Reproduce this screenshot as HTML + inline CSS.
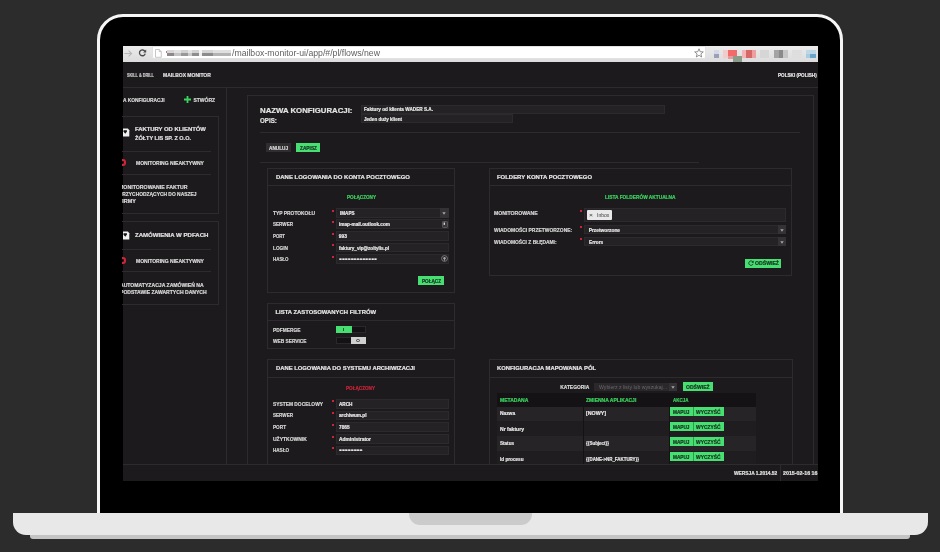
<!DOCTYPE html><html><head><meta charset="utf-8"><style>html,body{margin:0;padding:0;width:940px;height:552px;overflow:hidden;background:#2c2c2c;position:relative}.b{position:absolute}.t{position:absolute;white-space:nowrap;line-height:1;font-family:"Liberation Sans", sans-serif;transform-origin:0 50%}.s{-webkit-text-stroke:0.2px currentColor}</style></head><body><div class="b" style="left:97px;top:13.5px;width:746px;height:516.5px;background:#000;box-sizing:border-box;border:3px solid #f6f6f6;border-radius:26px 26px 0 0;"></div><div class="b" style="left:122.5px;top:45.5px;width:695.0px;height:435.0px;background:#1c1a1c;"></div><div class="b" style="left:12.5px;top:513px;width:915.5px;height:22px;background:#e8e8e8;border-radius:0 0 13px 13px;"></div><div class="b" style="left:30px;top:535px;width:880px;height:4px;background:#c4c4c4;border-radius:0 0 3px 3px;"></div><div class="b" style="left:408.5px;top:513px;width:123.0px;height:12px;background:#cbcbcb;border-radius:0 0 11px 11px;"></div><div style="position:absolute;left:122px;top:45px;width:696px;height:436px;overflow:hidden;will-change:transform"><div style="position:absolute;left:-122px;top:-45px;width:940px;height:552px"><div class="b" style="left:122.5px;top:45.5px;width:695.0px;height:16.5px;background:linear-gradient(#ebebeb,#dcdcdc);"></div><div class="b" style="left:152px;top:46px;width:553.5px;height:13px;background:#fff;box-sizing:border-box;border:1px solid #e2e2e2;border-radius:0 0 2px 2px;"></div><svg style="position:absolute;left:124px;top:49.5px" width="9" height="7" viewBox="0 0 9 7"><path d="M0.3 3.5H7.6M4.6 0.7L7.6 3.5L4.6 6.3" fill="none" stroke="#b8b8b8" stroke-width="1.1"/></svg><svg style="position:absolute;left:138px;top:49px" width="9" height="8" viewBox="0 0 9 8"><path d="M6.9 2.4A2.9 2.9 0 1 0 7.2 4.6" fill="none" stroke="#4a4a4a" stroke-width="1.3"/><path d="M8.2 0.5V3.6H5.1Z" fill="#4a4a4a"/></svg><svg style="position:absolute;left:155px;top:48.5px" width="7" height="9" viewBox="0 0 7 9"><path d="M0.5 0.5H4.2L6.3 2.6V8.3H0.5Z M4.2 0.5V2.6H6.3" fill="#fff" stroke="#b0b0b0" stroke-width="0.7"/></svg><div style="position:absolute;left:165.5px;top:51px;width:1px;height:2px;background:#d07070"></div><div style="position:absolute;left:0;top:0;width:940px;height:552px;filter:blur(0.7px)"><div style="position:absolute;left:166.8px;top:49.5px;width:7.199999999999989px;height:3.2px;background:#d6d6d6"></div><div style="position:absolute;left:174px;top:49.5px;width:7px;height:3.2px;background:#e2e2e2"></div><div style="position:absolute;left:181px;top:49.5px;width:6.5px;height:3.2px;background:#d0d0d0"></div><div style="position:absolute;left:187.5px;top:49.5px;width:4.5px;height:3.2px;background:#e4e4e4"></div><div style="position:absolute;left:192px;top:49.5px;width:7px;height:3.2px;background:#d2d2d2"></div><div style="position:absolute;left:199px;top:49.5px;width:2.5px;height:3.2px;background:#f4f4f4"></div><div style="position:absolute;left:202px;top:49.5px;width:11px;height:3.2px;background:#d4d4d4"></div><div style="position:absolute;left:213px;top:49.5px;width:18px;height:3.2px;background:#e0e0e0"></div><div style="position:absolute;left:166.8px;top:52.7px;width:7.199999999999989px;height:3.2px;background:#8a8a8a"></div><div style="position:absolute;left:174px;top:52.7px;width:7px;height:3.2px;background:#c4c4c4"></div><div style="position:absolute;left:181px;top:52.7px;width:6.5px;height:3.2px;background:#989898"></div><div style="position:absolute;left:187.5px;top:52.7px;width:4.5px;height:3.2px;background:#cacaca"></div><div style="position:absolute;left:192px;top:52.7px;width:7px;height:3.2px;background:#8e8e8e"></div><div style="position:absolute;left:199px;top:52.7px;width:2.5px;height:3.2px;background:#f0f0f0"></div><div style="position:absolute;left:202px;top:52.7px;width:11px;height:3.2px;background:#8c8c8c"></div><div style="position:absolute;left:213px;top:52.7px;width:18px;height:3.2px;background:#b4b4b4"></div></div><div class="t" style="left:232.00px;top:49.00px;font-size:8.8px;color:#606060;font-weight:400;transform:scaleX(0.989);">/mailbox-monitor-ui/app/#/pl/flows/new</div><svg style="position:absolute;left:694px;top:48px" width="10" height="10" viewBox="0 0 10 10"><path d="M5 0.8L6.2 3.7L9.3 3.9L6.9 5.9L7.7 9L5 7.3L2.3 9L3.1 5.9L0.7 3.9L3.8 3.7Z" fill="none" stroke="#777" stroke-width="0.8"/></svg><div style="position:absolute;left:0;top:0;width:940px;height:552px;filter:blur(0.6px)"><div style="position:absolute;left:714px;top:50px;width:5px;height:4px;background:#d4d8e6"></div><div style="position:absolute;left:714px;top:54px;width:5px;height:4px;background:#9aa0ba"></div><div style="position:absolute;left:723px;top:50px;width:5px;height:8px;background:#f2cccc"></div><div style="position:absolute;left:727.5px;top:49.5px;width:9.5px;height:6.5px;background:#f26a6a"></div><div style="position:absolute;left:728px;top:56px;width:5px;height:3px;background:#e89a9a"></div><div style="position:absolute;left:732.5px;top:55.5px;width:9px;height:6.5px;background:#8c9c8a"></div><div style="position:absolute;left:741.5px;top:50px;width:4px;height:8px;background:#f2b4b4"></div><div style="position:absolute;left:745.5px;top:50px;width:6px;height:8px;background:#d86868"></div><div style="position:absolute;left:751.5px;top:50px;width:4px;height:8px;background:#eea0a0"></div><div style="position:absolute;left:759.5px;top:50px;width:9px;height:8px;background:#d6d6d6"></div><div style="position:absolute;left:774px;top:50px;width:5px;height:8px;background:#a4a4a4"></div><div style="position:absolute;left:779px;top:50px;width:4px;height:8px;background:#8a8a8a"></div><div style="position:absolute;left:783px;top:50px;width:5px;height:8px;background:#c6c6c6"></div><div style="position:absolute;left:792px;top:50px;width:10px;height:8px;background:#dedede"></div><div style="position:absolute;left:806px;top:50px;width:10px;height:4px;background:#bcd8e6"></div><div style="position:absolute;left:806px;top:54px;width:4px;height:4px;background:#a8cce0"></div><div style="position:absolute;left:810px;top:54px;width:6px;height:4px;background:#6aa6cc"></div></div><div class="b" style="left:122.5px;top:87px;width:695.0px;height:1px;background:#2d2b2d;"></div><div class="t s" style="left:127.10px;top:74.00px;font-size:4.6px;color:#c8c8c8;font-weight:700;transform:scaleX(0.822);">SKILL &amp; DRILL</div><div class="t s" style="left:163.00px;top:73.00px;font-size:5.2px;color:#e0e0e0;font-weight:700;transform:scaleX(0.961);">MAILBOX MONITOR</div><div class="t s" style="left:778.30px;top:73.00px;font-size:5px;color:#e8e8e8;font-weight:700;transform:scaleX(0.922);">POLSKI (POLISH)</div><div class="b" style="left:226px;top:87px;width:1px;height:377px;background:#2d2b2d;"></div><div class="t s" style="left:123.00px;top:99.00px;font-size:4.9px;color:#d8d8d8;font-weight:700;transform:scaleX(0.992);">A KONFIGURACJI</div><svg style="position:absolute;left:183.8px;top:95.5px" width="7" height="7" viewBox="0 0 7 7"><path d="M3.5 0V7M0 3.5H7" stroke="#3bd45f" stroke-width="1.8"/></svg><div class="t s" style="left:193.40px;top:98.00px;font-size:5px;color:#d8d8d8;font-weight:700;">STWÓRZ</div><div class="b" style="left:110px;top:115.5px;width:109px;height:98.0px;box-sizing:border-box;border:1px solid #2d2b2d;"></div><svg style="position:absolute;left:122.5px;top:128.2px" width="7" height="9" viewBox="0 0 7 9"><path d="M0 0.6H4.9L6.3 2.2V8.6H0Z" fill="#f0f0f0"/><path d="M0.5 2.3H3.9V3.6L2.3 5.7L0.5 3.8Z" fill="#151315"/></svg><div class="t s" style="left:134.90px;top:127.00px;font-size:5.9px;color:#e2e2e2;font-weight:700;">FAKTURY OD KLIENTÓW</div><div class="t s" style="left:134.90px;top:136.00px;font-size:5.9px;color:#e2e2e2;font-weight:700;transform:scaleX(0.938);">ŻÓŁTY LIS SP. Z O.O.</div><div class="b" style="left:115px;top:151px;width:96px;height:1px;background:#2d2b2d;"></div><div style="position:absolute;left:119.6px;top:159.4px;width:6.4px;height:6.4px;box-sizing:border-box;border:2.2px solid #d0243a;border-radius:50%"></div><div class="t s" style="left:135.90px;top:161.00px;font-size:5px;color:#d8d8d8;font-weight:700;transform:scaleX(1.007);">MONITORING NIEAKTYWNY</div><div class="b" style="left:115px;top:174px;width:96px;height:1px;background:#2d2b2d;"></div><div class="t s" style="left:119.30px;top:185.00px;font-size:5px;color:#d8d8d8;font-weight:700;transform:scaleX(1.046);">MONITOROWANIE FAKTUR</div><div class="t s" style="left:119.30px;top:192.00px;font-size:5px;color:#d8d8d8;font-weight:700;transform:scaleX(0.982);">PRZYCHODZĄCYCH DO NASZEJ</div><div class="t s" style="left:119.30px;top:199.00px;font-size:5px;color:#d8d8d8;font-weight:700;transform:scaleX(1.092);">FIRMY</div><div class="b" style="left:110px;top:221px;width:109px;height:83.5px;box-sizing:border-box;border:1px solid #2d2b2d;"></div><svg style="position:absolute;left:122.5px;top:230.6px" width="7" height="9" viewBox="0 0 7 9"><path d="M0 0.6H4.9L6.3 2.2V8.6H0Z" fill="#f0f0f0"/><path d="M0.5 2.3H3.9V3.6L2.3 5.7L0.5 3.8Z" fill="#151315"/></svg><div class="t s" style="left:135.20px;top:233.00px;font-size:5.9px;color:#e2e2e2;font-weight:700;transform:scaleX(1.027);">ZAMÓWIENIA W PDFACH</div><div class="b" style="left:115px;top:249px;width:96px;height:1px;background:#2d2b2d;"></div><div style="position:absolute;left:119.6px;top:257.3px;width:6.4px;height:6.4px;box-sizing:border-box;border:2.2px solid #d0243a;border-radius:50%"></div><div class="t s" style="left:135.90px;top:259.00px;font-size:5px;color:#d8d8d8;font-weight:700;transform:scaleX(1.007);">MONITORING NIEAKTYWNY</div><div class="b" style="left:115px;top:271px;width:96px;height:1px;background:#2d2b2d;"></div><div class="t s" style="left:119.50px;top:283.00px;font-size:5px;color:#d8d8d8;font-weight:700;transform:scaleX(1.018);">AUTOMATYZACJA ZAMÓWIEŃ NA</div><div class="t s" style="left:119.50px;top:290.00px;font-size:5px;color:#d8d8d8;font-weight:700;transform:scaleX(1.014);">PODSTAWIE ZAWARTYCH DANYCH</div><div class="b" style="left:247px;top:95px;width:567px;height:505px;box-sizing:border-box;border:1px solid #2d2b2d;"></div><div class="t s" style="left:260.30px;top:107.00px;font-size:7.4px;color:#e4e4e4;font-weight:700;transform:scaleX(1.055);">NAZWA KONFIGURACJI:</div><div class="t s" style="left:260.30px;top:117.00px;font-size:7.4px;color:#e4e4e4;font-weight:700;transform:scaleX(0.840);">OPIS:</div><div class="b" style="left:361px;top:104.5px;width:303.5px;height:9.200000000000003px;background:#242224;box-sizing:border-box;border:1px solid #2c2a2c;"></div><div class="t s" style="left:363.50px;top:108.00px;font-size:4.8px;color:#e8e8e8;font-weight:700;transform:scaleX(0.973);">Faktury od klienta WADER S.A.</div><div class="b" style="left:361px;top:114px;width:152px;height:8.5px;background:#242224;box-sizing:border-box;border:1px solid #2c2a2c;"></div><div class="t s" style="left:363.50px;top:118.00px;font-size:4.8px;color:#e8e8e8;font-weight:700;transform:scaleX(0.950);">Jeden duży klient</div><div class="b" style="left:260px;top:132px;width:540px;height:1px;background:#2d2b2d;"></div><div class="b" style="left:265.5px;top:143px;width:25.5px;height:9px;background:#2f2d2f;"></div><div class="t s" style="left:268.50px;top:147.00px;font-size:4.6px;color:#d8d8d8;font-weight:700;transform:scaleX(1.019);">ANULUJ</div><div class="b" style="left:296px;top:143px;width:24px;height:9px;background:#47de72;"></div><div class="t s" style="left:299.50px;top:147.00px;font-size:4.6px;color:#1a3320;font-weight:700;transform:scaleX(1.040);">ZAPISZ</div><div class="b" style="left:260px;top:162px;width:439px;height:1px;background:#2d2b2d;"></div><div class="b" style="left:267px;top:168px;width:188px;height:125px;box-sizing:border-box;border:1px solid #2d2b2d;"></div><div class="b" style="left:267px;top:185px;width:188px;height:1px;background:#2d2b2d;"></div><div class="t s" style="left:275.50px;top:175.00px;font-size:5.9px;color:#e6e6e6;font-weight:700;transform:scaleX(1.013);">DANE LOGOWANIA DO KONTA POCZTOWEGO</div><div class="t s" style="left:346.50px;top:196.00px;font-size:4.6px;color:#3ad35e;font-weight:700;transform:scaleX(1.005);">POŁĄCZONY</div><div class="t s" style="left:273.00px;top:212.00px;font-size:4.9px;color:#d4d4d4;font-weight:700;">TYP PROTOKOŁU</div><div style="position:absolute;left:332px;top:210px;width:2px;height:2px;background:#d02238"></div><div class="b" style="left:336px;top:208.2px;width:113px;height:9.400000000000006px;background:#242224;box-sizing:border-box;border:1px solid #2c2a2c;"></div><div class="t s" style="left:273.00px;top:223.00px;font-size:4.9px;color:#d4d4d4;font-weight:700;transform:scaleX(0.935);">SERWER</div><div style="position:absolute;left:332px;top:221px;width:2px;height:2px;background:#d02238"></div><div class="b" style="left:336px;top:219.2px;width:113px;height:9.600000000000023px;background:#242224;box-sizing:border-box;border:1px solid #2c2a2c;"></div><div class="t s" style="left:273.00px;top:235.00px;font-size:4.9px;color:#d4d4d4;font-weight:700;transform:scaleX(0.883);">PORT</div><div style="position:absolute;left:332px;top:233px;width:2px;height:2px;background:#d02238"></div><div class="b" style="left:336px;top:231.2px;width:113px;height:9.400000000000006px;background:#242224;box-sizing:border-box;border:1px solid #2c2a2c;"></div><div class="t s" style="left:273.00px;top:247.00px;font-size:4.9px;color:#d4d4d4;font-weight:700;transform:scaleX(0.968);">LOGIN</div><div style="position:absolute;left:332px;top:244px;width:2px;height:2px;background:#d02238"></div><div class="b" style="left:336px;top:242.8px;width:113px;height:9.399999999999977px;background:#242224;box-sizing:border-box;border:1px solid #2c2a2c;"></div><div class="t s" style="left:273.00px;top:258.00px;font-size:4.9px;color:#d4d4d4;font-weight:700;transform:scaleX(0.905);">HASŁO</div><div style="position:absolute;left:332px;top:256px;width:2px;height:2px;background:#d02238"></div><div class="b" style="left:336px;top:254.2px;width:113px;height:9.600000000000023px;background:#242224;box-sizing:border-box;border:1px solid #2c2a2c;"></div><div class="b" style="left:440px;top:208.2px;width:9px;height:9.400000000000006px;background:#343234;"></div><svg style="position:absolute;left:442.3px;top:211.5px" width="4" height="3" viewBox="0 0 4 3"><path d="M0.3 0.3H3.7L2 2.8Z" fill="#a8a8a8"/></svg><svg style="position:absolute;left:441.8px;top:221px" width="6" height="7" viewBox="0 0 6 7"><rect x="0.4" y="0.4" width="5.2" height="6.2" rx="1" fill="#3a383a" stroke="#6a686a" stroke-width="0.8"/><rect x="1.6" y="1.5" width="1.4" height="2.4" fill="#d0d0d0"/></svg><svg style="position:absolute;left:441px;top:255px" width="7" height="7" viewBox="0 0 7 7"><circle cx="3.5" cy="3.5" r="2.9" fill="none" stroke="#807e80" stroke-width="0.9"/><circle cx="3.5" cy="3.3" r="1.2" fill="#a8a8a8"/><path d="M3.5 3.8V5.8" stroke="#a8a8a8" stroke-width="0.8"/></svg><div class="t s" style="left:340.20px;top:212.00px;font-size:4.8px;color:#e8e8e8;font-weight:700;transform:scaleX(0.954);">IMAPS</div><div class="t s" style="left:338.80px;top:223.00px;font-size:4.8px;color:#e8e8e8;font-weight:700;transform:scaleX(0.976);">imap-mail.outlook.com</div><div class="t s" style="left:338.80px;top:235.00px;font-size:4.8px;color:#e8e8e8;font-weight:700;">993</div><div class="t s" style="left:338.80px;top:247.00px;font-size:4.8px;color:#e8e8e8;font-weight:700;transform:scaleX(0.959);">faktury_vip@zoltylis.pl</div><div class="t s" style="left:338.80px;top:256.00px;font-size:6px;color:#e8e8e8;font-weight:700;transform:scaleX(1.391);">•••••••••••••</div><div class="b" style="left:418px;top:276.4px;width:26px;height:8.900000000000034px;background:#47de72;"></div><div class="t s" style="left:421.50px;top:280.00px;font-size:4.6px;color:#1a3320;font-weight:700;transform:scaleX(1.006);">POŁĄCZ</div><div class="b" style="left:488.5px;top:168px;width:303.5px;height:107.5px;box-sizing:border-box;border:1px solid #2d2b2d;"></div><div class="b" style="left:488.5px;top:185px;width:303.5px;height:1px;background:#2d2b2d;"></div><div class="t s" style="left:497.00px;top:175.00px;font-size:5.9px;color:#e6e6e6;font-weight:700;transform:scaleX(1.006);">FOLDERY KONTA POCZTOWEGO</div><div class="t s" style="left:604.80px;top:196.00px;font-size:4.6px;color:#3ad35e;font-weight:700;transform:scaleX(1.045);">LISTA FOLDERÓW AKTUALNA</div><div class="t s" style="left:494.10px;top:212.00px;font-size:4.9px;color:#d4d4d4;font-weight:700;transform:scaleX(1.053);">MONITOROWANE</div><div style="position:absolute;left:580px;top:210px;width:2px;height:2px;background:#d02238"></div><div class="b" style="left:584.2px;top:208px;width:201.79999999999995px;height:14px;background:#242224;box-sizing:border-box;border:1px solid #2c2a2c;"></div><div class="b" style="left:587px;top:210px;width:25px;height:10.300000000000011px;background:#e9e9e9;border-radius:1px;"></div><div class="t" style="left:589.30px;top:212.00px;font-size:6px;color:#3a3a3a;font-weight:400;transform:scaleX(1.138);">×</div><div class="t" style="left:597.00px;top:214.00px;font-size:4.8px;color:#383838;font-weight:400;transform:scaleX(1.047);">Inbox</div><div class="t s" style="left:494.10px;top:229.00px;font-size:4.9px;color:#d4d4d4;font-weight:700;transform:scaleX(1.010);">WIADOMOŚCI PRZETWORZONE:</div><div style="position:absolute;left:580px;top:226px;width:2px;height:2px;background:#d02238"></div><div class="b" style="left:584.2px;top:225.4px;width:201.79999999999995px;height:8.5px;background:#242224;box-sizing:border-box;border:1px solid #2c2a2c;"></div><div class="b" style="left:777.5px;top:225.4px;width:8.5px;height:8.5px;background:#343234;"></div><div class="t s" style="left:588.80px;top:229.00px;font-size:4.8px;color:#e8e8e8;font-weight:700;">Przetworzone</div><div class="t s" style="left:494.10px;top:241.00px;font-size:4.9px;color:#d4d4d4;font-weight:700;">WIADOMOŚCI Z BŁĘDAMI:</div><div style="position:absolute;left:580px;top:238px;width:2px;height:2px;background:#d02238"></div><div class="b" style="left:584.2px;top:237.4px;width:201.79999999999995px;height:8.400000000000006px;background:#242224;box-sizing:border-box;border:1px solid #2c2a2c;"></div><div class="b" style="left:777.5px;top:237.4px;width:8.5px;height:8.400000000000006px;background:#343234;"></div><div class="t s" style="left:588.80px;top:241.00px;font-size:4.8px;color:#e8e8e8;font-weight:700;transform:scaleX(0.979);">Errors</div><svg style="position:absolute;left:779.6px;top:228.7px" width="4" height="3" viewBox="0 0 4 3"><path d="M0.3 0.3H3.7L2 2.8Z" fill="#a8a8a8"/></svg><svg style="position:absolute;left:779.6px;top:240.7px" width="4" height="3" viewBox="0 0 4 3"><path d="M0.3 0.3H3.7L2 2.8Z" fill="#a8a8a8"/></svg><div class="b" style="left:745.3px;top:258.5px;width:36.10000000000002px;height:9.199999999999989px;background:#47de72;"></div><svg style="position:absolute;left:748.3px;top:260.3px" width="6" height="6" viewBox="0 0 6 6"><path d="M5 2.2A2.2 2.2 0 1 0 5.1 3.8" fill="none" stroke="#1a3320" stroke-width="0.9"/><path d="M5.6 0.6V2.8H3.4Z" fill="#1a3320"/></svg><div class="t s" style="left:755.00px;top:262.00px;font-size:4.6px;color:#1a3320;font-weight:700;transform:scaleX(1.120);">ODŚWIEŻ</div><div class="b" style="left:267px;top:303.4px;width:188px;height:45.60000000000002px;box-sizing:border-box;border:1px solid #2d2b2d;"></div><div class="b" style="left:267px;top:320.4px;width:188px;height:1.0px;background:#2d2b2d;"></div><div class="t s" style="left:275.50px;top:310.00px;font-size:5.9px;color:#e6e6e6;font-weight:700;">LISTA ZASTOSOWANYCH FILTRÓW</div><div class="t s" style="left:273.00px;top:329.00px;font-size:4.9px;color:#d4d4d4;font-weight:700;transform:scaleX(0.992);">PDFMERGE</div><div class="b" style="left:336px;top:325.7px;width:30px;height:7.699999999999989px;background:#141214;box-sizing:border-box;border:1px solid #2a282a;"></div><div class="b" style="left:336px;top:325.7px;width:16px;height:7.699999999999989px;background:#47de72;"></div><div class="t s" style="left:343.20px;top:328.00px;font-size:4px;color:#1a3320;font-weight:700;transform:scaleX(1.067);">I</div><div class="t s" style="left:273.00px;top:340.00px;font-size:4.9px;color:#d4d4d4;font-weight:700;transform:scaleX(0.981);">WEB SERVICE</div><div class="b" style="left:336px;top:336.6px;width:30px;height:7.899999999999977px;background:#141214;box-sizing:border-box;border:1px solid #2a282a;"></div><div class="b" style="left:350.5px;top:336.6px;width:15.5px;height:7.899999999999977px;background:#d0d0d0;"></div><div style="position:absolute;left:356.3px;top:338.9px;width:3.4px;height:3.4px;box-sizing:border-box;border:0.8px solid #444;border-radius:50%"></div><div class="b" style="left:267px;top:359.4px;width:188px;height:240.60000000000002px;box-sizing:border-box;border:1px solid #2d2b2d;"></div><div class="b" style="left:267px;top:376.5px;width:188px;height:1.0px;background:#2d2b2d;"></div><div class="t s" style="left:275.50px;top:366.00px;font-size:5.9px;color:#e6e6e6;font-weight:700;transform:scaleX(0.993);">DANE LOGOWANIA DO SYSTEMU ARCHIWIZACJI</div><div class="t s" style="left:346.00px;top:387.00px;font-size:4.6px;color:#c8253a;font-weight:700;transform:scaleX(1.005);">POŁĄCZONY</div><div class="t s" style="left:273.00px;top:403.00px;font-size:4.9px;color:#d4d4d4;font-weight:700;transform:scaleX(0.994);">SYSTEM DOCELOWY</div><div style="position:absolute;left:332px;top:400px;width:2px;height:2px;background:#d02238"></div><div class="b" style="left:336px;top:399px;width:113px;height:9.600000000000023px;background:#242224;box-sizing:border-box;border:1px solid #2c2a2c;"></div><div class="t s" style="left:273.00px;top:414.00px;font-size:4.9px;color:#d4d4d4;font-weight:700;transform:scaleX(0.935);">SERWER</div><div style="position:absolute;left:332px;top:412px;width:2px;height:2px;background:#d02238"></div><div class="b" style="left:336px;top:410.7px;width:113px;height:9.300000000000011px;background:#242224;box-sizing:border-box;border:1px solid #2c2a2c;"></div><div class="t s" style="left:273.00px;top:426.00px;font-size:4.9px;color:#d4d4d4;font-weight:700;transform:scaleX(0.956);">PORT</div><div style="position:absolute;left:332px;top:424px;width:2px;height:2px;background:#d02238"></div><div class="b" style="left:336px;top:422.2px;width:113px;height:9.600000000000023px;background:#242224;box-sizing:border-box;border:1px solid #2c2a2c;"></div><div class="t s" style="left:273.00px;top:438.00px;font-size:4.9px;color:#d4d4d4;font-weight:700;transform:scaleX(1.025);">UŻYTKOWNIK</div><div style="position:absolute;left:332px;top:436px;width:2px;height:2px;background:#d02238"></div><div class="b" style="left:336px;top:434px;width:113px;height:9.600000000000023px;background:#242224;box-sizing:border-box;border:1px solid #2c2a2c;"></div><div class="t s" style="left:273.00px;top:449.00px;font-size:4.9px;color:#d4d4d4;font-weight:700;transform:scaleX(0.934);">HASŁO</div><div style="position:absolute;left:332px;top:447px;width:2px;height:2px;background:#d02238"></div><div class="b" style="left:336px;top:445.6px;width:113px;height:9.199999999999989px;background:#242224;box-sizing:border-box;border:1px solid #2c2a2c;"></div><div class="t s" style="left:338.80px;top:403.00px;font-size:4.8px;color:#e8e8e8;font-weight:700;transform:scaleX(0.974);">ARCH</div><div class="t s" style="left:338.80px;top:414.00px;font-size:4.8px;color:#e8e8e8;font-weight:700;transform:scaleX(0.982);">archiwum.pl</div><div class="t s" style="left:338.80px;top:426.00px;font-size:4.8px;color:#e8e8e8;font-weight:700;transform:scaleX(0.984);">7865</div><div class="t s" style="left:338.80px;top:438.00px;font-size:4.8px;color:#e8e8e8;font-weight:700;transform:scaleX(1.017);">Administrator</div><div class="t s" style="left:338.80px;top:447.00px;font-size:6px;color:#e8e8e8;font-weight:700;transform:scaleX(1.398);">••••••••</div><div class="b" style="left:488.5px;top:359.4px;width:304.0px;height:240.60000000000002px;box-sizing:border-box;border:1px solid #2d2b2d;"></div><div class="b" style="left:488.5px;top:377px;width:304.0px;height:1px;background:#2d2b2d;"></div><div class="t s" style="left:497.00px;top:366.00px;font-size:5.9px;color:#e6e6e6;font-weight:700;transform:scaleX(0.993);">KONFIGURACJA MAPOWANIA PÓL</div><div class="t s" style="left:560.20px;top:386.00px;font-size:4.9px;color:#d8d8d8;font-weight:700;">KATEGORIA</div><div class="b" style="left:594px;top:382.5px;width:83px;height:8.5px;background:#2a282a;"></div><div class="b" style="left:668.7px;top:382.5px;width:8.299999999999955px;height:8.5px;background:#343234;"></div><svg style="position:absolute;left:670.8px;top:385.5px" width="4" height="3" viewBox="0 0 4 3"><path d="M0.3 0.3H3.7L2 2.8Z" fill="#a8a8a8"/></svg><div class="t" style="left:598.50px;top:386.00px;font-size:4.6px;color:#6a686a;font-weight:400;transform:scaleX(1.125);">Wybierz z listy lub wyszukaj...</div><div class="b" style="left:683px;top:382px;width:30px;height:9.199999999999989px;background:#47de72;"></div><div class="t s" style="left:686.20px;top:386.00px;font-size:4.6px;color:#1a3320;font-weight:700;transform:scaleX(1.101);">ODŚWIEŻ</div><div class="b" style="left:497.2px;top:393.2px;width:259.00000000000006px;height:13.5px;background:#141214;"></div><div class="b" style="left:497.2px;top:406.7px;width:259.00000000000006px;height:14.699999999999989px;background:#262426;"></div><div class="b" style="left:497.2px;top:421.4px;width:259.00000000000006px;height:14.800000000000011px;background:#1f1d1f;"></div><div class="b" style="left:497.2px;top:436.2px;width:259.00000000000006px;height:15.199999999999989px;background:#262426;"></div><div class="b" style="left:497.2px;top:451.4px;width:259.00000000000006px;height:18.600000000000023px;background:#1f1d1f;"></div><div class="b" style="left:583px;top:393.2px;width:1px;height:76.80000000000001px;background:#141214;"></div><div class="b" style="left:669.3px;top:393.2px;width:1.0px;height:76.80000000000001px;background:#141214;"></div><div class="t s" style="left:499.90px;top:399.00px;font-size:4.7px;color:#3ad35e;font-weight:700;transform:scaleX(1.072);">METADANA</div><div class="t s" style="left:585.70px;top:399.00px;font-size:4.7px;color:#3ad35e;font-weight:700;transform:scaleX(1.069);">ZMIENNA APLIKACJI</div><div class="t s" style="left:672.70px;top:399.00px;font-size:4.7px;color:#3ad35e;font-weight:700;transform:scaleX(0.959);">AKCJA</div><div class="t s" style="left:499.60px;top:412.00px;font-size:4.8px;color:#e4e4e4;font-weight:700;transform:scaleX(1.011);">Nazwa</div><div class="t s" style="left:585.70px;top:412.00px;font-size:4.8px;color:#e4e4e4;font-weight:700;transform:scaleX(1.103);">[NOWY]</div><div class="t s" style="left:499.60px;top:428.00px;font-size:4.8px;color:#e4e4e4;font-weight:700;transform:scaleX(1.059);">Nr faktury</div><div class="t s" style="left:499.60px;top:442.00px;font-size:4.8px;color:#e4e4e4;font-weight:700;transform:scaleX(0.954);">Status</div><div class="t s" style="left:585.70px;top:442.00px;font-size:4.8px;color:#e4e4e4;font-weight:700;transform:scaleX(0.928);">{{Subject}}</div><div class="t s" style="left:499.60px;top:458.00px;font-size:4.8px;color:#e4e4e4;font-weight:700;transform:scaleX(0.968);">Id procesu</div><div class="t s" style="left:585.70px;top:458.00px;font-size:4.8px;color:#e4e4e4;font-weight:700;transform:scaleX(0.921);">{{DANE->NR_FAKTURY}}</div><div class="b" style="left:670px;top:407px;width:54.299999999999955px;height:9px;background:#47de72;"></div><div class="b" style="left:693.1px;top:407px;width:1.0px;height:9px;background:#2a9f4a;"></div><div class="t s" style="left:673.00px;top:411.00px;font-size:4.6px;color:#1a3320;font-weight:700;transform:scaleX(1.025);">MAPUJ</div><div class="t s" style="left:696.00px;top:411.00px;font-size:4.6px;color:#1a3320;font-weight:700;transform:scaleX(1.067);">WYCZYŚĆ</div><div class="b" style="left:670px;top:421.9px;width:54.299999999999955px;height:9.100000000000023px;background:#47de72;"></div><div class="b" style="left:693.1px;top:421.9px;width:1.0px;height:9.100000000000023px;background:#2a9f4a;"></div><div class="t s" style="left:673.00px;top:426.00px;font-size:4.6px;color:#1a3320;font-weight:700;transform:scaleX(1.025);">MAPUJ</div><div class="t s" style="left:696.00px;top:426.00px;font-size:4.6px;color:#1a3320;font-weight:700;transform:scaleX(1.067);">WYCZYŚĆ</div><div class="b" style="left:670px;top:437px;width:54.299999999999955px;height:8.800000000000011px;background:#47de72;"></div><div class="b" style="left:693.1px;top:437px;width:1.0px;height:8.800000000000011px;background:#2a9f4a;"></div><div class="t s" style="left:673.00px;top:441.00px;font-size:4.6px;color:#1a3320;font-weight:700;transform:scaleX(1.025);">MAPUJ</div><div class="t s" style="left:696.00px;top:441.00px;font-size:4.6px;color:#1a3320;font-weight:700;transform:scaleX(1.067);">WYCZYŚĆ</div><div class="b" style="left:670px;top:451.9px;width:54.299999999999955px;height:9.100000000000023px;background:#47de72;"></div><div class="b" style="left:693.1px;top:451.9px;width:1.0px;height:9.100000000000023px;background:#2a9f4a;"></div><div class="t s" style="left:673.00px;top:456.00px;font-size:4.6px;color:#1a3320;font-weight:700;transform:scaleX(1.025);">MAPUJ</div><div class="t s" style="left:696.00px;top:456.00px;font-size:4.6px;color:#1a3320;font-weight:700;transform:scaleX(1.067);">WYCZYŚĆ</div><div class="b" style="left:122.5px;top:464px;width:695.0px;height:16.5px;background:#1c1a1c;"></div><div class="b" style="left:122.5px;top:464px;width:695.0px;height:1px;background:#2d2b2d;"></div><div class="b" style="left:779.5px;top:464px;width:1.0px;height:16.5px;background:#2d2b2d;"></div><div class="t s" style="left:734.00px;top:472.00px;font-size:4.9px;color:#e0e0e0;font-weight:700;transform:scaleX(0.985);">WERSJA 1.2014.52</div><div class="t s" style="left:782.70px;top:472.00px;font-size:4.9px;color:#e0e0e0;font-weight:700;transform:scaleX(1.084);">2015-02-16 16</div></div></div></body></html>
